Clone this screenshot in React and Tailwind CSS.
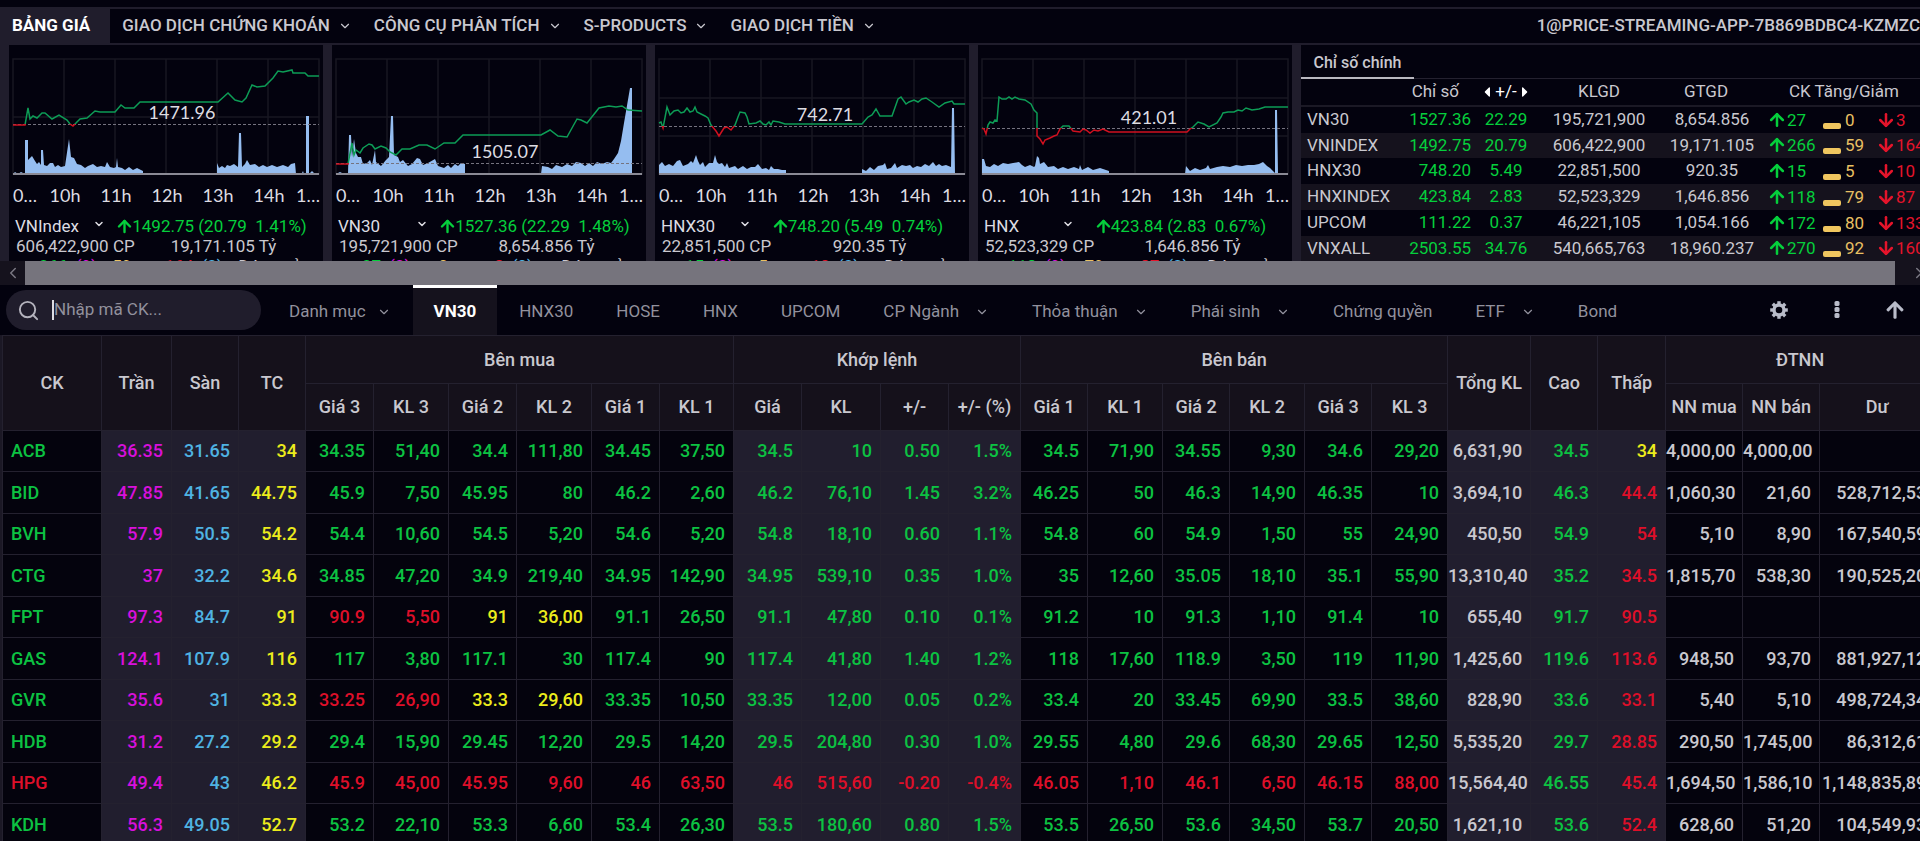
import React from "react";
import clsx from "clsx";
import {
  ArrowDown,
  ArrowUp,
  ChevronDown,
  ChevronLeft,
  ChevronRight,
  Search,
} from "lucide-react";
import { FaArrowUp, FaCaretLeft, FaCaretRight } from "react-icons/fa";

const COLORS = {
  g: "text-[#0cc242]",
  r: "text-[#de0f29]",
  y: "text-[#ecec1c]",
  m: "text-[#d810dc]",
  c: "text-[#4fb3e2]",
  w: "text-[#c9c8cf]",
};

const MENU = [
  "GIAO DỊCH CHỨNG KHOÁN",
  "CÔNG CỤ PHÂN TÍCH",
  "S-PRODUCTS",
  "GIAO DỊCH TIỀN",
];

const TABS = [
  { label: "Danh mục", menu: true, compact: true },
  { label: "VN30", active: true },
  { label: "HNX30" },
  { label: "HOSE" },
  { label: "HNX" },
  { label: "UPCOM" },
  { label: "CP Ngành", menu: true },
  { label: "Thỏa thuận", menu: true },
  { label: "Phái sinh", menu: true },
  { label: "Chứng quyền" },
  { label: "ETF", menu: true },
  { label: "Bond" },
];

const CHARTS = [
  {
    id: "vnindex",
    name: "VNIndex",
    price: "1492.75",
    change: "20.79",
    percent: "1.41%",
    volume: "606,422,900 CP",
    value: "19,171.105 Tỷ",
    counts: ["266", "(9)", "59", "164", "(2)"],
    base: 79,
    label: "1471.96",
    labelX: 173,
    labelY: 74,
    rows: [72],
    line: "4,80 16,80 19,63 21,74 24,71 28,73 33,68 36,68 43,74 50,70 58,75 61,79 64,81 67,78 71,74 78,73 86,66 91,67 106,67 112,60 116,63 125,63 131,57 209,57 219,48 226,55 233,57 237,53 243,40 248,42 256,41 264,33 269,26 274,27 283,25 284,28 296,28 299,31 310,31",
    area: "4,129 6,127 9,129 12,127 16,129 16,95 19,95 19,115 23,111 26,116 28,119 30,117 32,120 32,105 34,105 35,120 38,121 41,118 44,118 46,122 49,120 52,122 56,121 60,94 62,112 65,113 68,119 72,120 76,123 79,121 84,119 88,122 92,121 96,122 98,117 101,122 105,123 107,122 108,113 109,122 113,123 116,125 120,122 124,125 128,123 134,126 134,129 208,129 208,118 210,123 213,121 216,123 218,120 221,121 225,119 229,122 230,88 232,88 233,122 236,119 238,115 241,120 246,119 250,122 254,120 258,122 263,120 268,122 274,120 279,122 282,119 286,118 287,129 293,128 294,126 295,129 297,129 297,71 300,71 300,129 303,126 306,129 310,128",
  },
  {
    id: "vn30",
    name: "VN30",
    price: "1527.36",
    change: "22.29",
    percent: "1.48%",
    volume: "195,721,900 CP",
    value: "8,654.856 Tỷ",
    counts: ["27", "(2)", "0", "3", "(0)"],
    base: 118,
    label: "1505.07",
    labelX: 173,
    labelY: 113,
    rows: [72],
    line: "4,119 16,119 20,98 22,110 24,105 28,108 31,103 37,99 40,100 43,104 49,101 54,103 58,107 64,110 70,104 78,104 87,100 95,100 103,104 112,98 123,98 131,90 209,90 218,85 226,91 235,92 245,74 249,75 255,78 267,63 277,61 284,62 290,61 296,65 310,66",
    area: "4,129 8,127 12,129 16,129 17,90 19,90 20,112 22,94 24,108 26,112 29,112 31,119 35,118 38,115 40,120 43,105 44,117 49,121 54,115 57,112 59,71 61,71 62,110 66,112 68,117 71,115 76,121 80,119 85,113 88,114 91,120 96,118 103,114 106,121 112,123 116,120 119,123 123,119 126,121 129,118 133,119 133,129 209,129 210,121 216,122 220,124 224,120 230,122 235,119 240,121 244,117 249,118 253,121 257,118 261,121 265,117 270,119 275,117 279,118 282,114 286,108 289,96 292,78 298,43 300,43 300,129",
  },
  {
    id: "hnx30",
    name: "HNX30",
    price: "748.20",
    change: "5.49",
    percent: "0.74%",
    volume: "22,851,500 CP",
    value: "920.35 Tỷ",
    counts: ["15", "(2)", "5", "10", "(2)"],
    base: 81,
    label: "742.71",
    labelX: 170,
    labelY: 76,
    rows: [53, 91],
    line: "4,78 6,77 8,83 12,62 15,70 19,66 23,65 26,68 29,67 32,63 35,67 38,66 40,62 42,67 46,69 50,71 53,73 56,80 61,86 64,91 69,83 72,82 76,85 80,80 83,72 85,67 90,68 92,72 94,79 101,78 105,76 108,79 111,80 114,77 116,80 118,76 124,77 130,79 207,79 213,72 217,70 221,64 225,71 237,71 243,54 246,52 251,59 254,57 259,55 263,57 267,54 271,53 277,57 284,62 290,58 297,56 299,59 310,59",
    area: "4,129 4,120 7,117 10,121 14,119 18,121 22,116 25,115 28,121 33,119 36,116 38,118 41,110 43,116 45,120 48,117 50,122 54,118 58,118 60,110 62,117 64,119 67,118 70,122 72,118 74,123 80,121 83,124 88,121 92,124 96,122 100,122 103,119 107,124 111,123 114,125 116,121 119,124 123,124 127,125 131,125 131,129 207,129 207,124 211,126 215,122 219,125 223,121 228,120 230,118 232,124 236,123 240,118 242,123 247,120 251,121 255,120 258,123 262,121 266,122 270,119 274,121 278,117 281,121 284,119 287,121 291,120 296,122 297,63 299,63 300,129",
  },
  {
    id: "hnx",
    name: "HNX",
    price: "423.84",
    change: "2.83",
    percent: "0.67%",
    volume: "52,523,329 CP",
    value: "1,646.856 Tỷ",
    counts: ["118", "(9)", "79", "87", "(2)"],
    base: 83,
    label: "421.01",
    labelX: 171,
    labelY: 79,
    rows: [53, 91],
    line: "4,83 6,84 8,89 10,80 12,77 15,78 17,75 19,76 21,52 24,54 28,54 31,52 34,54 37,52 41,54 47,55 53,59 56,65 59,68 59,91 62,94 65,99 67,95 72,93 76,91 79,90 82,84 85,81 91,81 95,86 102,87 105,84 108,85 112,88 116,85 120,86 125,84 131,87 209,87 212,84 215,82 218,79 220,77 226,79 231,82 239,78 243,72 245,68 250,67 256,67 260,65 264,66 268,63 274,65 281,64 287,62 310,62",
    area: "4,129 4,114 6,114 8,121 12,122 16,119 20,121 25,118 30,119 35,118 41,117 44,120 47,122 52,120 56,122 57,121 59,111 61,113 62,119 66,117 70,122 76,121 80,124 85,122 90,124 96,122 101,124 102,120 104,125 110,122 115,125 122,123 131,126 131,129 207,129 208,121 212,126 217,123 222,125 228,123 230,120 232,124 239,122 245,121 252,122 258,120 264,121 270,120 276,120 281,119 285,117 289,121 292,123 297,128 297,65 299,65 300,129",
  },
];

const AXIS = [
  ["0…", 4, "start"],
  ["10h", 56, "middle"],
  ["11h", 107, "middle"],
  ["12h", 158, "middle"],
  ["13h", 209, "middle"],
  ["14h", 260, "middle"],
  ["1…", 311, "end"],
];

const INDICES = [
  ["VN30", "1527.36", "22.29", "195,721,900", "8,654.856", "27", "0", "3"],
  ["VNINDEX", "1492.75", "20.79", "606,422,900", "19,171.105", "266", "59", "164"],
  ["HNX30", "748.20", "5.49", "22,851,500", "920.35", "15", "5", "10"],
  ["HNXINDEX", "423.84", "2.83", "52,523,329", "1,646.856", "118", "79", "87"],
  ["UPCOM", "111.22", "0.37", "46,221,105", "1,054.166", "172", "80", "133"],
  ["VNXALL", "2503.55", "34.76", "540,665,763", "18,960.237", "270", "92", "160"],
];

const COL_WIDTHS = [
  99, 70, 67, 67, 68, 75, 68, 75, 68, 74, 68, 79, 68, 72, 67, 75, 67, 75, 67,
  76, 83, 67, 68, 77, 77, 115,
];

// columns drawn on the lighter background
const SHADED = [1, 2, 3, 10, 11, 12, 13, 20, 21, 22];

const SUB_HEADS = [
  "Giá 3", "KL 3", "Giá 2", "KL 2", "Giá 1", "KL 1",
  "Giá", "KL", "+/-", "+/- (%)",
  "Giá 1", "KL 1", "Giá 2", "KL 2", "Giá 3", "KL 3",
  "NN mua", "NN bán", "Dư",
];

// one colour letter per column, then the values
const STOCKS = [
  ["gmcyggggggggggggggggwgywww", "ACB 36.35 31.65 34 34.35 51,40 34.4 111,80 34.45 37,50 34.5 10 0.50 1.5% 34.5 71,90 34.55 9,30 34.6 29,20 6,631,90 34.5 34 4,000,00 4,000,00 -"],
  ["gmcyggggggggggggggggwgrwww", "BID 47.85 41.65 44.75 45.9 7,50 45.95 80 46.2 2,60 46.2 76,10 1.45 3.2% 46.25 50 46.3 14,90 46.35 10 3,694,10 46.3 44.4 1,060,30 21,60 528,712,53"],
  ["gmcyggggggggggggggggwgrwww", "BVH 57.9 50.5 54.2 54.4 10,60 54.5 5,20 54.6 5,20 54.8 18,10 0.60 1.1% 54.8 60 54.9 1,50 55 24,90 450,50 54.9 54 5,10 8,90 167,540,59"],
  ["gmcyggggggggggggggggwgrwww", "CTG 37 32.2 34.6 34.85 47,20 34.9 219,40 34.95 142,90 34.95 539,10 0.35 1.0% 35 12,60 35.05 18,10 35.1 55,90 13,310,40 35.2 34.5 1,815,70 538,30 190,525,20"],
  ["gmcyrryyggggggggggggwgrwww", "FPT 97.3 84.7 91 90.9 5,50 91 36,00 91.1 26,50 91.1 47,80 0.10 0.1% 91.2 10 91.3 1,10 91.4 10 655,40 91.7 90.5 - - -"],
  ["gmcyggggggggggggggggwgrwww", "GAS 124.1 107.9 116 117 3,80 117.1 30 117.4 90 117.4 41,80 1.40 1.2% 118 17,60 118.9 3,50 119 11,90 1,425,60 119.6 113.6 948,50 93,70 881,927,12"],
  ["gmcyrryyggggggggggggwgrwww", "GVR 35.6 31 33.3 33.25 26,90 33.3 29,60 33.35 10,50 33.35 12,00 0.05 0.2% 33.4 20 33.45 69,90 33.5 38,60 828,90 33.6 33.1 5,40 5,10 498,724,34"],
  ["gmcyggggggggggggggggwgrwww", "HDB 31.2 27.2 29.2 29.4 15,90 29.45 12,20 29.5 14,20 29.5 204,80 0.30 1.0% 29.55 4,80 29.6 68,30 29.65 12,50 5,535,20 29.7 28.85 290,50 1,745,00 86,312,61"],
  ["rmcyrrrrrrrrrrrrrrrrwgrwww", "HPG 49.4 43 46.2 45.9 45,00 45.95 9,60 46 63,50 46 515,60 -0.20 -0.4% 46.05 1,10 46.1 6,50 46.15 88,00 15,564,40 46.55 45.4 1,694,50 1,586,10 1,148,835,89"],
  ["gmcyggggggggggggggggwgrwww", "KDH 56.3 49.05 52.7 53.2 22,10 53.3 6,60 53.4 26,30 53.5 180,60 0.80 1.5% 53.5 26,50 53.6 34,50 53.7 20,50 1,621,10 53.6 52.4 628,60 51,20 104,549,93"],
].map(([colors, line]) => ({ colors, cells: line.split(" ") }));

export default function App() {
  return (
    <div className="flex h-screen flex-col overflow-hidden bg-[#03020e] font-['Roboto','Liberation_Sans',sans-serif] text-[#c9c8cf]">
      <TopNav />
      <Overview />
      <ScrollBar />
      <Toolbar />
      <PriceBoard />
    </div>
  );
}

function TopNav() {
  return (
    <header className="mt-[7px] flex h-[38px] shrink-0 items-stretch overflow-hidden border-y-2 border-[#201d2c] whitespace-nowrap text-[17px] font-medium">
      <a
        href="#board"
        className="flex items-center bg-[#201d2c] pl-3 pr-5 font-bold text-white"
      >
        BẢNG GIÁ
      </a>
      <nav className="flex items-center gap-[22px] pl-3">
        {MENU.map((label) => (
          <button key={label} type="button" className="flex items-center gap-2">
            {label}
            <ChevronDown size={14} strokeWidth={2} />
          </button>
        ))}
      </nav>
      <span className="ml-auto flex items-center">
        1@PRICE-STREAMING-APP-7B869BDBC4-KZMZC
      </span>
    </header>
  );
}

function Overview() {
  return (
    <section className="flex h-[216px] shrink-0 gap-[9px] overflow-hidden bg-[#201d2c] pl-[9px]">
      {CHARTS.map((c) => (
        <IndexCard key={c.id} chart={c} />
      ))}
      <IndexTable />
    </section>
  );
}

function IndexCard({ chart }) {
  const [up, ceiling, flat, down, floor] = chart.counts;

  return (
    <article className="w-[314px] shrink-0 bg-[#03020e] text-[17px] leading-5 whitespace-nowrap">
      <IndexChart chart={chart} />
      <div className="flex pl-1.5 text-[#dddce2]">
        <button type="button" className="flex w-[90px] items-center justify-between">
          {chart.name}
          <ChevronDown size={12} strokeWidth={3} className="mb-1" />
        </button>
        <div className="flex flex-1 items-center justify-center text-[#05cf3c]">
          <ArrowUp size={19} strokeWidth={3} className="-mx-0.5" />
          <span className="pr-1">
            {chart.price} ({chart.change}&nbsp; {chart.percent})
          </span>
        </div>
      </div>
      <div className="flex pl-[7px]">
        <span className="w-[108px]">{chart.volume}</span>
        <span className="flex-1 text-center">{chart.value}</span>
      </div>
      <div className="flex h-5 items-center justify-between px-3">
        <span className="flex items-center gap-1 text-[#05cf3c]">
          <ArrowUp size={14} strokeWidth={3} />
          {up}
          <span className="pl-1 text-[#d810dc]">{ceiling}</span>
        </span>
        <span className="text-[#e9c063]">{flat}</span>
        <span className="flex items-center gap-1 text-[#e5142b]">
          <ArrowDown size={14} strokeWidth={3} />
          {down}
          <span className="pl-1 text-[#4fb3e2]">{floor}</span>
        </span>
        <span>Đóng cửa</span>
      </div>
    </article>
  );
}

function IndexChart({ chart }) {
  return (
    <svg
      viewBox="0 0 314 171"
      className="block h-[171px] w-[314px] font-['Lato',sans-serif]"
      role="img"
      aria-label={chart.name}
    >
      <defs>
        <clipPath id={`${chart.id}-above`}>
          <rect x="0" y="0" width="314" height={chart.base} />
        </clipPath>
        <clipPath id={`${chart.id}-below`}>
          <rect x="0" y={chart.base} width="314" height="60" />
        </clipPath>
      </defs>
      <g stroke="#181722" strokeWidth="1.5" fill="none">
        <rect x="4" y="14" width="306" height="115" />
        {[55, 106, 157, 208, 259].map((x) => (
          <path key={x} d={`M${x} 14V129`} />
        ))}
        {chart.rows.map((y) => (
          <path key={y} d={`M4 ${y}H310`} />
        ))}
      </g>
      <polygon points={chart.area} fill="#95bdf0" />
      <path d="M4 129H310" stroke="#8b8a95" strokeWidth="2" />
      <path
        d={`M4 ${chart.base}.5H310`}
        stroke="#75737f"
        strokeWidth="1"
        strokeDasharray="3 2"
      />
      <g fill="none" strokeWidth="1.5">
        <polyline
          points={chart.line}
          stroke="#0d9c56"
          clipPath={`url(#${chart.id}-above)`}
        />
        <polyline
          points={chart.line}
          stroke="#d0101f"
          clipPath={`url(#${chart.id}-below)`}
        />
      </g>
      <g fill="#dddce2" fontSize="18">
        <text x={chart.labelX} y={chart.labelY} textAnchor="middle">
          {chart.label}
        </text>
        {AXIS.map(([label, x, anchor]) => (
          <text key={label} x={x} y="157" textAnchor={anchor}>
            {label}
          </text>
        ))}
      </g>
    </svg>
  );
}

function IndexTable() {
  return (
    <div className="min-w-[640px] flex-1 bg-[#03020e] text-[17px] whitespace-nowrap">
      <div className="flex h-[34px] border-b border-[#24212f]">
        <button
          type="button"
          className="-mb-px w-[113px] border-b-2 border-[#b9b8c0] pt-1 text-center text-base font-medium"
        >
          Chỉ số chính
        </button>
      </div>
      <table className="w-full table-fixed">
        <colgroup>
          <col className="w-[98px]" />
          <col className="w-[72px]" />
          <col className="w-[70px]" />
          <col className="w-[116px]" />
          <col className="w-[110px]" />
          <col />
        </colgroup>
        <thead>
          <tr className="h-[27px] border-b-2 border-[#1b1925]">
            <th aria-label="Tên" />
            <th className="p-0 pr-3 text-right font-normal">Chỉ số</th>
            <th className="p-0 font-normal">
              <span className="flex items-center justify-center text-white">
                <FaCaretLeft size={16} />
                +/-
                <FaCaretRight size={16} />
              </span>
            </th>
            <th className="p-0 font-normal">KLGD</th>
            <th className="p-0 pr-3 font-normal">GTGD</th>
            <th className="p-0 pl-[22px] text-left font-normal">CK Tăng/Giảm</th>
          </tr>
        </thead>
        <tbody>
          {INDICES.map(([name, point, change, vol, val, up, flat, down]) => (
            <tr key={name} className="odd:h-[26px] even:h-[25px] even:bg-[#15121d]">
              <td className="p-0 pl-1.5">{name}</td>
              <td className="p-0 text-right text-[#05cf3c]">{point}</td>
              <td className="p-0 text-center text-[#05cf3c]">{change}</td>
              <td className="p-0 text-center">{vol}</td>
              <td className="p-0 text-center">{val}</td>
              <td className="p-0">
                <div className="flex leading-5">
                  <span className="flex w-[56px] items-center text-[#05cf3c]">
                    <ArrowUp size={20} strokeWidth={3} />
                    {up}
                  </span>
                  <span className="flex w-[53px] items-center gap-1 text-[#e9c063]">
                    <i className="mt-3 h-1.5 w-[18px] rounded-xs bg-[#f0c65f]" />
                    {flat}
                  </span>
                  <span className="flex items-center text-[#e5142b]">
                    <ArrowDown size={20} strokeWidth={3} />
                    {down}
                  </span>
                </div>
              </td>
            </tr>
          ))}
        </tbody>
      </table>
    </div>
  );
}

function ScrollBar() {
  return (
    <div className="flex h-6 shrink-0 items-center bg-[#15121d] text-[#7a7883]">
      <button type="button" aria-label="Cuộn trái" className="flex w-[25px] justify-center">
        <ChevronLeft size={18} />
      </button>
      <div className="h-full flex-1 bg-[#76747d]" />
      <button type="button" aria-label="Cuộn phải" className="flex w-[25px] justify-end overflow-hidden">
        <ChevronRight size={18} className="-mr-2" />
      </button>
    </div>
  );
}

function Toolbar() {
  return (
    <div className="flex h-[50px] shrink-0 items-stretch pl-1.5 text-[17px] whitespace-nowrap text-[#92919d]">
      <label className="flex h-10 w-[255px] items-center self-center rounded-full bg-[#201d2c] pl-[11px]">
        <Search size={23} strokeWidth={2} className="text-[#b4b3bd]" />
        <span className="ml-3 h-5 w-0.5 bg-[#dddce2]" />
        <input
          type="text"
          aria-label="Nhập mã CK"
          placeholder="Nhập mã CK..."
          className="w-40 bg-transparent outline-none placeholder:text-[#92919d]"
        />
      </label>
      <nav className="ml-[7px] flex gap-px">
        {TABS.map((t) => (
          <button
            key={t.label}
            type="button"
            className={clsx(
              "flex items-center border-t-[3px] px-[21px]",
              t.compact ? "gap-[11px]" : "gap-4",
              t.active
                ? "border-white bg-[#15121d] font-bold text-white"
                : "border-transparent"
            )}
          >
            {t.label}
            {t.menu && <ChevronDown size={14} strokeWidth={2} />}
          </button>
        ))}
      </nav>
      <div className="ml-auto flex items-center gap-9 pr-[15px] text-[#b9bcc9]">
        <button type="button" aria-label="Cài đặt">
          <GearIcon />
        </button>
        <button type="button" aria-label="Thêm">
          <DotsIcon />
        </button>
        <button type="button" aria-label="Thu gọn">
          <FaArrowUp size={20} />
        </button>
      </div>
    </div>
  );
}

function GearIcon() {
  return (
    <svg viewBox="0 0 20 20" className="size-5" fill="none" stroke="currentColor">
      <circle cx="10" cy="10" r="5" strokeWidth="3.4" />
      {[0, 45, 90, 135, 180, 225, 270, 315].map((deg) => (
        <path
          key={deg}
          d="M10 1.2V4.5"
          strokeWidth="3.4"
          transform={`rotate(${deg} 10 10)`}
        />
      ))}
    </svg>
  );
}

function DotsIcon() {
  return (
    <svg viewBox="0 0 24 20" className="h-5 w-6" fill="currentColor">
      {[1, 7, 13].map((y) => (
        <rect key={y} x="9.5" y={y} width="5" height="5" rx="1.6" />
      ))}
    </svg>
  );
}

function PriceBoard() {
  const head = "border border-[#24212f] p-0 font-medium";

  return (
    <main id="board" className="flex-1 overflow-hidden bg-[#1b1825] pl-[2px]">
      <table className="w-full min-w-[1932px] table-fixed border-collapse bg-[#04030d] text-lg font-medium whitespace-nowrap">
        <colgroup>
          {COL_WIDTHS.map((w, i) => (
            <col key={i} style={{ width: w }} />
          ))}
        </colgroup>
        <thead className="bg-[#15111b]">
          <tr className="h-12">
            <th rowSpan={2} className={head}>CK</th>
            <th rowSpan={2} className={head}>Trần</th>
            <th rowSpan={2} className={head}>Sàn</th>
            <th rowSpan={2} className={head}>TC</th>
            <th colSpan={6} className={head}>Bên mua</th>
            <th colSpan={4} className={head}>Khớp lệnh</th>
            <th colSpan={6} className={head}>Bên bán</th>
            <th rowSpan={2} className={head}>Tổng KL</th>
            <th rowSpan={2} className={head}>Cao</th>
            <th rowSpan={2} className={head}>Thấp</th>
            <th colSpan={3} className={head}>ĐTNN</th>
          </tr>
          <tr className="h-[47px]">
            {SUB_HEADS.map((label, i) => (
              <th key={i} className={head}>{label}</th>
            ))}
          </tr>
        </thead>
        <tbody>
          {STOCKS.map((s) => (
            <tr key={s.cells[0]} className="odd:h-[41px] even:h-[42px]">
              {s.cells.map((value, i) => (
                <td
                  key={i}
                  className={clsx(
                    "border border-[#24212f] py-0",
                    i === 0 ? "pl-2" : "pl-0 pr-2 text-right",
                    SHADED.includes(i) && "bg-[#211e2e]",
                    COLORS[s.colors[i]]
                  )}
                >
                  {value === "-" ? "" : value}
                </td>
              ))}
            </tr>
          ))}
        </tbody>
      </table>
    </main>
  );
}
